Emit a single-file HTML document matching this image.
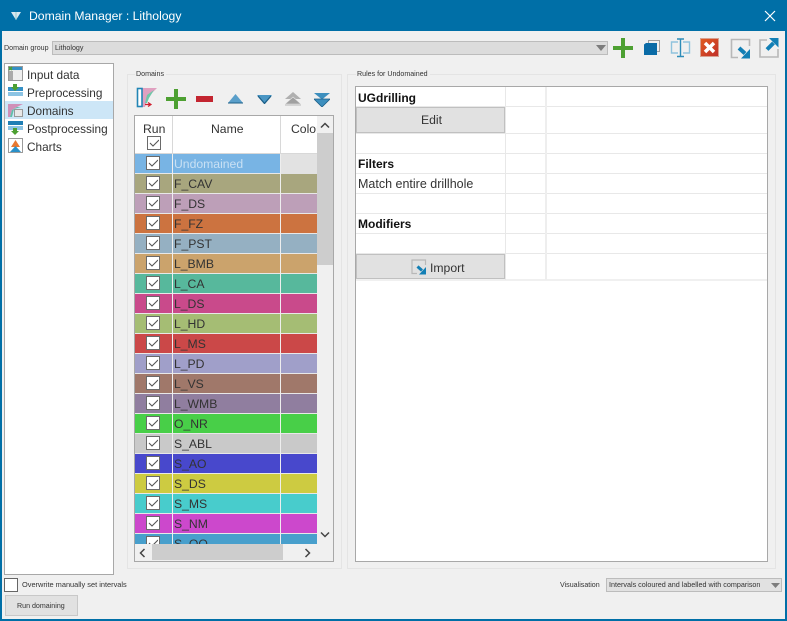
<!DOCTYPE html>
<html><head><meta charset="utf-8"><style>
html,body{margin:0;padding:0}
body{width:787px;height:621px;overflow:hidden;background:#f0f0f0;position:relative;font-family:"Liberation Sans",sans-serif;color:#222}
div,span,svg{position:absolute;box-sizing:border-box}
.t{white-space:nowrap;line-height:16px}
.sm{font-size:7.1px;color:#333;white-space:nowrap;line-height:10px}
.nav{left:27px;font-size:11.8px;color:#333;white-space:nowrap;line-height:16px}
.cb{width:14px;height:14px;background:#fff;border:1px solid #6a6a6a}
.cb svg{left:1px;top:1px}
.row{left:135px;width:182px;height:20px;border-bottom:1px solid #e8e8e8}
.row .n{left:39px;top:2px;font-size:12.2px;color:#333;line-height:16px;white-space:nowrap}
.row .v1{left:37px;top:0;width:1px;height:20px;background:#eee}
.row .v2{left:145px;top:0;width:1px;height:20px;background:#eee}
.row .cb{left:11px;top:2px}
.rl{left:356px;width:411px;height:1px;background:#e8e8e8}
.b{font-weight:bold;font-size:12px;left:358px;color:#111;line-height:16px;white-space:nowrap}
</style></head><body>
<div style="left:0;top:0;width:787px;height:621px;border:2px solid #006fa7;border-top:0"></div>
<div style="left:0;top:0;width:787px;height:31px;background:#006fa7"></div>
<svg style="left:10px;top:10px" width="12" height="12"><path d="M1 2H11L6 10Z" fill="#d8e8f0"/><path d="M6 2V10" stroke="#9cc" stroke-width="1"/></svg>
<div class="t" style="left:29px;top:8px;color:#fff;font-size:12.2px">Domain Manager : Lithology</div>
<svg style="left:764px;top:10px" width="12" height="12"><path d="M1 1L11 11M11 1L1 11" stroke="#fff" stroke-width="1.2"/></svg>

<div class="sm" style="left:4px;top:43px">Domain group</div>
<div style="left:52px;top:41px;width:556px;height:14px;background:#dcdcdc;border:1px solid #bcbcbc"></div>
<div class="sm" style="left:55px;top:43px">Lithology</div>
<svg style="left:596px;top:45px" width="10" height="6"><path d="M0 0H10L5 6Z" fill="#7c7c7c"/></svg>

<svg style="left:613px;top:38px" width="20" height="20"><path d="M8 0H12V8H20V12H12V20H8V12H0V8H8Z" fill="#4da032"/></svg>
<svg style="left:643px;top:39px" width="18" height="18"><path d="M5.5 4V1.5H16.5V12.5H14" fill="none" stroke="#a0a0a0"/><path d="M1 5.5L3 4H14V16H1Z" fill="#0a6ba6"/></svg>
<svg style="left:670px;top:38px" width="21" height="20"><path d="M8 4H1.5V15H8M13 4H19.5V15H13" fill="none" stroke="#8fc3dd" stroke-width="1.4"/><path d="M7 1H14M7 18.500H14M10.500 1V18.500" fill="none" stroke="#2d8cb8" stroke-width="1.4"/></svg>
<div style="left:700px;top:38px;width:19px;height:19px;background:linear-gradient(135deg,#e05a20,#c0302a);border:1px solid #d8a090"></div>
<svg style="left:700px;top:38px" width="19" height="19"><path d="M5 5L14 14M14 5L5 14" stroke="#fff" stroke-width="3.500"/></svg>
<svg style="left:730px;top:38px" width="21" height="21"><path d="M19.500 8V1.500H1.500V19.500H8" fill="none" stroke="#b8b8b8" stroke-width="1.600"/><path d="M9 10L15 15.500" stroke="#127fb5" stroke-width="4"/><path d="M20 11V20.500H11Z" fill="#127fb5"/></svg>
<svg style="left:758px;top:37px" width="22" height="21"><path d="M9 3H2V20H20V12" fill="none" stroke="#b8b8b8" stroke-width="1.600"/><path d="M9 12.500L15.500 6" stroke="#127fb5" stroke-width="4"/><path d="M11 1H20.500V10.500Z" fill="#127fb5"/></svg>

<!-- left nav -->
<div style="left:4px;top:63px;width:110px;height:512px;background:#fff;border:1px solid #a8a8a8"></div>
<div style="left:5px;top:101px;width:108px;height:18px;background:#cde6f7"></div>
<svg style="left:8px;top:66px" width="15" height="16"><rect x=".5" y=".5" width="14" height="14" fill="#eee" stroke="#9a9a9a"/><rect x="1" y="1" width="13" height="3" fill="#3590c5"/><rect x="1" y="5" width="4" height="9" fill="#aaa"/><path d="M1 1L4 4M4 1L1 4" stroke="#4da032" stroke-width="1.500"/></svg>
<svg style="left:8px;top:84px" width="15" height="15"><rect x="0" y="3" width="15" height="4" fill="#3590c5"/><rect x="0" y="8" width="15" height="4" fill="#8cc4e4"/><path d="M5 0H9V3H11L7 7L3 3H5Z" fill="#4da032"/></svg>
<svg style="left:8px;top:102px" width="15" height="16"><path d="M0 2H15L9 5L4 8L2 15H0Z" fill="#d090b8"/><path d="M2 15L4 8L9 5H13L6 7L4 15Z" fill="#60c0a8"/><rect x="6.500" y="7.500" width="8" height="7" fill="#e8e8e8" stroke="#999"/></svg>
<svg style="left:8px;top:120px" width="15" height="16"><rect x="0" y="1" width="15" height="4" fill="#1f7fb5"/><rect x="0" y="6" width="15" height="4" fill="#8cc4e4"/><path d="M5 8H9V11H11L7 15L3 11H5Z" fill="#4da032"/></svg>
<svg style="left:8px;top:138px" width="15" height="16"><rect x=".5" y=".5" width="14" height="14" fill="#fff" stroke="#9a9a9a"/><path d="M3 9L7.500 2L12 9Z" fill="#e87830"/><path d="M2 14L7.500 8L13 14Z" fill="#2a90c8"/></svg>
<div class="nav" style="top:67px">Input data</div>
<div class="nav" style="top:85px">Preprocessing</div>
<div class="nav" style="top:103px">Domains</div>
<div class="nav" style="top:121px">Postprocessing</div>
<div class="nav" style="top:139px">Charts</div>

<!-- domains group -->
<div style="left:127px;top:74px;width:215px;height:495px;border:1px solid #e4e4e4"></div>
<div class="sm" style="left:135px;top:69px;background:#f0f0f0;padding:0 2px 0 1px">Domains</div>

<svg style="left:136px;top:87px" width="22" height="22"><path d="M6 1H21L12 10L9 20H6Z" fill="#e0a0c0"/><path d="M9 16L11 8L18 3L13 11L11 16Z" fill="#70c8a8"/><rect x="1.500" y="1.500" width="4.500" height="18" fill="#fff" stroke="#2285b5" stroke-width="1.600"/><path d="M9 17.500H14M12 15.500L15 17.500L12 19.500" fill="none" stroke="#d02030" stroke-width="1.200"/></svg>
<svg style="left:166px;top:89px" width="20" height="20"><path d="M8 0H12V8H20V12H12V20H8V12H0V8H8Z" fill="#4da032"/></svg>
<div style="left:196px;top:96px;width:17px;height:6px;background:#c32530"></div>
<svg style="left:228px;top:94px" width="15" height="10"><path d="M7.500 0L15 9H0Z" fill="#5a9fca"/><path d="M0 9H15" stroke="#1c5f88"/></svg>
<svg style="left:257px;top:95px" width="15" height="9"><path d="M0 0H15L7.500 9Z" fill="#4a96c4"/><path d="M1 1L7.500 8.500L14 1" fill="none" stroke="#1c5f88" stroke-width="1.300"/></svg>
<svg style="left:285px;top:92px" width="16" height="14"><path d="M8 0L16 7H0Z" fill="#b0b0b0"/><path d="M8 5L16 12H0Z" fill="#a0a0a0" stroke="#e8e8e8" stroke-width=".6"/><path d="M0 13H16" stroke="#b8b8b8"/></svg>
<svg style="left:314px;top:93px" width="16" height="14"><path d="M0 0H16L8 6.500Z" fill="#3d8fbe"/><path d="M0 6H16L8 14Z" fill="#3d8fbe" stroke="#1c5f88" stroke-width=".8"/></svg>

<div style="left:134px;top:115px;width:200px;height:447px;background:#fff;border:1px solid #a8a8a8"></div>
<div style="left:135px;top:116px;width:182px;height:38px;background:#fff;border-bottom:1px solid #d8d8d8"></div>
<div style="left:172px;top:116px;width:1px;height:38px;background:#d8d8d8"></div>
<div style="left:280px;top:116px;width:1px;height:38px;background:#d8d8d8"></div>
<div class="t" style="left:143px;top:121px;font-size:12.2px;color:#333">Run</div>
<div class="t" style="left:211px;top:121px;font-size:12.2px;color:#333">Name</div>
<div class="t" style="left:291px;top:121px;font-size:12.2px;color:#333;width:26px;overflow:hidden">Color</div>
<div class="cb" style="left:147px;top:136px"><svg width="10" height="10"><path d="M1 5L4 8L10 2" fill="none" stroke="#555" stroke-width="1.100"/></svg></div>

<div class="row" style="top:154px;background:#78b4e4"><div class="n" style="color:#c8e0f4">Undomained</div><div class="v2" style="width:36px;background:#e2e2e2;left:146px"></div><div class="v2"></div><div class="v1"></div><div class="cb"><svg width="10" height="10"><path d="M1 5L4 8L10 2" fill="none" stroke="#555" stroke-width="1.100"/></svg></div></div>
<div class="row" style="top:174px;background:#a8a67e"><div class="n">F_CAV</div><div class="v1"></div><div class="v2"></div><div class="cb"><svg width="10" height="10"><path d="M1 5L4 8L10 2" fill="none" stroke="#555" stroke-width="1.100"/></svg></div></div>
<div class="row" style="top:194px;background:#bd9fb8"><div class="n">F_DS</div><div class="v1"></div><div class="v2"></div><div class="cb"><svg width="10" height="10"><path d="M1 5L4 8L10 2" fill="none" stroke="#555" stroke-width="1.100"/></svg></div></div>
<div class="row" style="top:214px;background:#cc7340"><div class="n">F_FZ</div><div class="v1"></div><div class="v2"></div><div class="cb"><svg width="10" height="10"><path d="M1 5L4 8L10 2" fill="none" stroke="#555" stroke-width="1.100"/></svg></div></div>
<div class="row" style="top:234px;background:#95b0c2"><div class="n">F_PST</div><div class="v1"></div><div class="v2"></div><div class="cb"><svg width="10" height="10"><path d="M1 5L4 8L10 2" fill="none" stroke="#555" stroke-width="1.100"/></svg></div></div>
<div class="row" style="top:254px;background:#cba36c"><div class="n">L_BMB</div><div class="v1"></div><div class="v2"></div><div class="cb"><svg width="10" height="10"><path d="M1 5L4 8L10 2" fill="none" stroke="#555" stroke-width="1.100"/></svg></div></div>
<div class="row" style="top:274px;background:#57b89c"><div class="n">L_CA</div><div class="v1"></div><div class="v2"></div><div class="cb"><svg width="10" height="10"><path d="M1 5L4 8L10 2" fill="none" stroke="#555" stroke-width="1.100"/></svg></div></div>
<div class="row" style="top:294px;background:#c94a8b"><div class="n">L_DS</div><div class="v1"></div><div class="v2"></div><div class="cb"><svg width="10" height="10"><path d="M1 5L4 8L10 2" fill="none" stroke="#555" stroke-width="1.100"/></svg></div></div>
<div class="row" style="top:314px;background:#a5bd74"><div class="n">L_HD</div><div class="v1"></div><div class="v2"></div><div class="cb"><svg width="10" height="10"><path d="M1 5L4 8L10 2" fill="none" stroke="#555" stroke-width="1.100"/></svg></div></div>
<div class="row" style="top:334px;background:#cb4848"><div class="n">L_MS</div><div class="v1"></div><div class="v2"></div><div class="cb"><svg width="10" height="10"><path d="M1 5L4 8L10 2" fill="none" stroke="#555" stroke-width="1.100"/></svg></div></div>
<div class="row" style="top:354px;background:#a09fc9"><div class="n">L_PD</div><div class="v1"></div><div class="v2"></div><div class="cb"><svg width="10" height="10"><path d="M1 5L4 8L10 2" fill="none" stroke="#555" stroke-width="1.100"/></svg></div></div>
<div class="row" style="top:374px;background:#a0786a"><div class="n">L_VS</div><div class="v1"></div><div class="v2"></div><div class="cb"><svg width="10" height="10"><path d="M1 5L4 8L10 2" fill="none" stroke="#555" stroke-width="1.100"/></svg></div></div>
<div class="row" style="top:394px;background:#907e9f"><div class="n">L_WMB</div><div class="v1"></div><div class="v2"></div><div class="cb"><svg width="10" height="10"><path d="M1 5L4 8L10 2" fill="none" stroke="#555" stroke-width="1.100"/></svg></div></div>
<div class="row" style="top:414px;background:#48cf48"><div class="n">O_NR</div><div class="v1"></div><div class="v2"></div><div class="cb"><svg width="10" height="10"><path d="M1 5L4 8L10 2" fill="none" stroke="#555" stroke-width="1.100"/></svg></div></div>
<div class="row" style="top:434px;background:#c9c9c9"><div class="n">S_ABL</div><div class="v1"></div><div class="v2"></div><div class="cb"><svg width="10" height="10"><path d="M1 5L4 8L10 2" fill="none" stroke="#555" stroke-width="1.100"/></svg></div></div>
<div class="row" style="top:454px;background:#4848cc"><div class="n">S_AO</div><div class="v1"></div><div class="v2"></div><div class="cb"><svg width="10" height="10"><path d="M1 5L4 8L10 2" fill="none" stroke="#555" stroke-width="1.100"/></svg></div></div>
<div class="row" style="top:474px;background:#cdcb41"><div class="n">S_DS</div><div class="v1"></div><div class="v2"></div><div class="cb"><svg width="10" height="10"><path d="M1 5L4 8L10 2" fill="none" stroke="#555" stroke-width="1.100"/></svg></div></div>
<div class="row" style="top:494px;background:#48cccc"><div class="n">S_MS</div><div class="v1"></div><div class="v2"></div><div class="cb"><svg width="10" height="10"><path d="M1 5L4 8L10 2" fill="none" stroke="#555" stroke-width="1.100"/></svg></div></div>
<div class="row" style="top:514px;background:#cc48cc"><div class="n">S_NM</div><div class="v1"></div><div class="v2"></div><div class="cb"><svg width="10" height="10"><path d="M1 5L4 8L10 2" fill="none" stroke="#555" stroke-width="1.100"/></svg></div></div>
<div style="left:135px;top:534px;width:182px;height:10px;overflow:hidden"><div class="row" style="left:0;top:0;background:#489fcc"><div class="n">S_OO</div><div class="v1"></div><div class="v2"></div><div class="cb"><svg width="10" height="10"><path d="M1 5L4 8L10 2" fill="none" stroke="#555" stroke-width="1.100"/></svg></div></div></div>

<!-- scrollbars -->
<div style="left:317px;top:116px;width:16px;height:445px;background:#f0f0f0"></div>
<div style="left:317px;top:133px;width:16px;height:132px;background:#cdcdcd"></div>
<svg style="left:320px;top:122px" width="10" height="7"><path d="M1 5.500L5 1.500L9 5.500" fill="none" stroke="#444" stroke-width="1.500"/></svg>
<svg style="left:320px;top:531px" width="10" height="7"><path d="M1 1.500L5 5.500L9 1.500" fill="none" stroke="#444" stroke-width="1.500"/></svg>
<div style="left:135px;top:544px;width:182px;height:17px;background:#f0f0f0"></div>
<div style="left:152px;top:544px;width:131px;height:16px;background:#cdcdcd"></div>
<svg style="left:139px;top:548px" width="7" height="10"><path d="M5.500 1L1.500 5L5.500 9" fill="none" stroke="#444" stroke-width="1.500"/></svg>
<svg style="left:304px;top:548px" width="7" height="10"><path d="M1.500 1L5.500 5L1.500 9" fill="none" stroke="#444" stroke-width="1.500"/></svg>

<!-- rules group -->
<div style="left:347px;top:74px;width:429px;height:495px;border:1px solid #e4e4e4"></div>
<div class="sm" style="left:356px;top:69px;background:#f0f0f0;padding:0 2px 0 1px">Rules for Undomained</div>
<div style="left:355px;top:86px;width:413px;height:476px;background:#fff;border:1px solid #a8a8a8"></div>
<div class="rl" style="top:106px;width:411px"></div>
<div class="rl" style="top:133px"></div>
<div class="rl" style="top:153px"></div>
<div class="rl" style="top:173px"></div>
<div class="rl" style="top:193px"></div>
<div class="rl" style="top:213px"></div>
<div class="rl" style="top:233px"></div>
<div class="rl" style="top:253px"></div>
<div class="rl" style="top:279px;background:#f0f0f0;height:2px"></div>
<div style="left:505px;top:87px;width:1px;height:193px;background:#e8e8e8"></div>
<div style="left:545px;top:87px;width:2px;height:193px;background:#eeeeee"></div>
<div class="b" style="top:90px">UGdrilling</div>
<div style="left:356px;top:107px;width:149px;height:26px;background:#e1e1e1;border:1px solid #c0c0c0"></div>
<div class="t" style="left:421px;top:112px;font-size:12.200px;color:#333">Edit</div>
<div class="b" style="top:156px">Filters</div>
<div class="t" style="left:358px;top:176px;font-size:12.500px;color:#333">Match entire drillhole</div>
<div class="b" style="top:216px">Modifiers</div>
<div style="left:356px;top:254px;width:149px;height:25px;background:#e1e1e1;border:1px solid #c0c0c0"></div>
<svg style="left:411px;top:259px" width="16" height="16"><path d="M14.500 6V1H1V14.500H6" fill="none" stroke="#b8b8b8" stroke-width="1.200"/><path d="M6.500 7.500L11 11.500" stroke="#127fb5" stroke-width="3"/><path d="M15 8V15.500H8Z" fill="#127fb5"/></svg>
<div class="t" style="left:430px;top:260px;font-size:12.200px;color:#333">Import</div>

<!-- bottom -->
<div class="cb" style="left:4px;top:578px;border-color:#666;width:14px"></div>
<div class="sm" style="left:22px;top:580px;font-size:7.400px">Overwrite manually set intervals</div>
<div style="left:5px;top:595px;width:73px;height:21px;background:#e1e1e1;border:1px solid #c8c8c8"></div>
<div class="sm" style="left:17px;top:601px">Run domaining</div>
<div class="sm" style="left:560px;top:580px">Visualisation</div>
<div style="left:606px;top:578px;width:176px;height:14px;background:#e1e1e1;border:1px solid #bcbcbc"></div>
<div class="sm" style="left:609px;top:580px;font-size:7.200px">Intervals coloured and labelled with comparison</div>
<svg style="left:771px;top:583px" width="10" height="5"><path d="M0 0H9L4.500 5Z" fill="#7c7c7c"/></svg>
</body></html>
